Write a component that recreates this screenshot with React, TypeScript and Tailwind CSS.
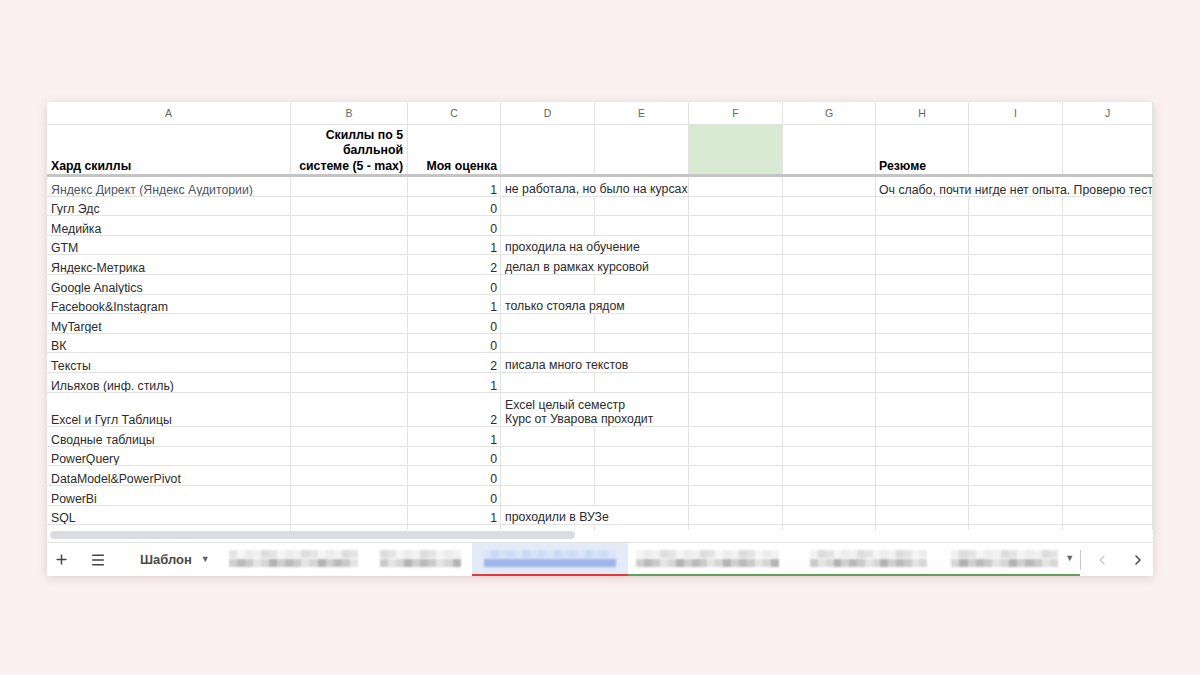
import { Plus, Menu, ChevronLeft, ChevronRight } from 'lucide-react';

const COLS = 'grid grid-cols-[244px_117px_93px_94px_94px_94px_93px_93px_94px_90px]';
const LINE = 'border-r border-b border-[#e2e3e3]';

type Skill = {
  name: string;
  score: number;
  note?: string[];
  summary?: string;
  tall?: boolean;
};

const skills: Skill[] = [
  {
    name: 'Яндекс Директ (Яндекс Аудитории)',
    score: 1,
    note: ['не работала, но было на курсах'],
    summary: 'Оч слабо, почти нигде нет опыта. Проверю тестовое задание',
  },
  { name: 'Гугл Эдс', score: 0 },
  { name: 'Медийка', score: 0 },
  { name: 'GTM', score: 1, note: ['проходила на обучение'] },
  { name: 'Яндекс-Метрика', score: 2, note: ['делал в рамках курсовой'] },
  { name: 'Google Analytics', score: 0 },
  { name: 'Facebook&Instagram', score: 1, note: ['только стояла рядом'] },
  { name: 'MyTarget', score: 0 },
  { name: 'ВК', score: 0 },
  { name: 'Тексты', score: 2, note: ['писала много текстов'] },
  { name: 'Ильяхов (инф. стиль)', score: 1 },
  {
    name: 'Excel и Гугл Таблицы',
    score: 2,
    note: ['Excel целый семестр', 'Курс от Уварова проходит'],
    tall: true,
  },
  { name: 'Сводные таблицы', score: 1 },
  { name: 'PowerQuery', score: 0 },
  { name: 'DataModel&PowerPivot', score: 0 },
  { name: 'PowerBi', score: 0 },
  { name: 'SQL', score: 1, note: ['проходили в ВУЗе'] },
];

const letters = ['A', 'B', 'C', 'D', 'E', 'F', 'G', 'H', 'I', 'J'];

// shades for the pixelated sheet names
const greyTop = ['bg-[#f1f1f1]', 'bg-[#e4e4e4]', 'bg-[#ececec]', 'bg-[#dcdcdc]', 'bg-[#f5f5f5]'];
const greyBottom = ['bg-[#c9c9c9]', 'bg-[#bababa]', 'bg-[#cfcfcf]', 'bg-[#b2b2b2]', 'bg-[#d6d6d6]', 'bg-[#e4e4e4]'];
const blueTop = ['bg-[#d6e1f6]', 'bg-[#cbd8f3]', 'bg-[#dbe4f7]', 'bg-[#d0dcf4]'];
const blueBottom = ['bg-[#a9bfeb]', 'bg-[#95b0e6]', 'bg-[#8ea9e4]', 'bg-[#b3c6ed]', 'bg-[#9db5e8]'];

function Pixelated({ width, seed, blue }: { width: number; seed: number; blue?: boolean }) {
  const count = Math.round(width / 8);
  const top = blue ? blueTop : greyTop;
  const bottom = blue ? blueBottom : greyBottom;
  return (
    <div className="flex flex-col gap-[1px] blur-[1px]" style={{ width }}>
      <div className="flex h-[8px]">
        {Array.from({ length: count }).map((_, i) => (
          <div key={i} className={`h-full flex-1 ${top[(i * 3 + seed) % top.length]}`} />
        ))}
      </div>
      <div className="flex h-[8px]">
        {Array.from({ length: count }).map((_, i) => (
          <div key={i} className={`h-full flex-1 ${bottom[(i * 5 + seed * 2) % bottom.length]}`} />
        ))}
      </div>
    </div>
  );
}

function Caret() {
  return <span className="text-[9px] text-[#5f6368]">▼</span>;
}

function SkillRow({ s, first }: { s: Skill; first?: boolean }) {
  const h = s.tall ? 'h-[34.6px]' : 'h-[19.6px]';
  const cell = `${LINE} ${h} flex items-end leading-[12px] overflow-hidden whitespace-nowrap`;
  return (
    <div className={COLS}>
      <div className={`${cell} pl-[4px] ${first ? 'text-[#4d5566]' : 'text-[#2b2b2b]'}`}>{s.name}</div>
      <div className={cell} />
      <div className={`${cell} justify-end pr-[3px]`}>{s.score}</div>
      {s.note ? (
        <div className={`${cell} col-span-2 pl-[4px] flex-col items-start justify-end leading-[14px]`}>
          {s.note.map((n) => (
            <span key={n}>{n}</span>
          ))}
        </div>
      ) : (
        <>
          <div className={cell} />
          <div className={cell} />
        </>
      )}
      <div className={cell} />
      <div className={cell} />
      {s.summary ? (
        <div className={`${cell} col-span-3 pl-[3px]`}>{s.summary}</div>
      ) : (
        <>
          <div className={cell} />
          <div className={cell} />
          <div className={cell} />
        </>
      )}
    </div>
  );
}

export default function App() {
  return (
    <div className="min-h-[675px] w-[1200px] bg-[#fcf1f1] pt-[102px] pl-[47px] font-['Liberation_Sans',Arial,sans-serif]">
      <div className="w-[1106px] h-[474px] bg-white overflow-hidden flex flex-col shadow-[0_2px_10px_rgba(60,40,40,0.18)]">
        {/* sheet grid */}
        <div className="h-[428px] overflow-hidden text-[12.3px] text-[#2b2b2b]">
          <div className={COLS}>
            {letters.map((l) => (
              <div
                key={l}
                className={`${LINE} h-[23px] pt-[2px] flex items-center justify-center text-[10.5px] text-[#666] bg-white`}
              >
                {l}
              </div>
            ))}
          </div>

          <div className={`${COLS} font-bold text-black leading-[15.5px]`}>
            <div className={`${LINE} h-[49px] border-b-0 flex items-end pl-[4px]`}>Хард скиллы</div>
            <div className={`${LINE} h-[49px] border-b-0 flex items-end justify-end pr-[4px] text-right`}>
              Скиллы по 5
              <br />
              балльной
              <br />
              системе (5 - max)
            </div>
            <div className={`${LINE} h-[49px] border-b-0 flex items-end justify-end pr-[3px]`}>Моя оценка</div>
            <div className={`${LINE} h-[49px] border-b-0`} />
            <div className={`${LINE} h-[49px] border-b-0`} />
            <div className={`${LINE} h-[49px] border-b-0 bg-[#d9ead3]`} />
            <div className={`${LINE} h-[49px] border-b-0`} />
            <div className={`${LINE} h-[49px] border-b-0 flex items-end pl-[3px]`}>Резюме</div>
            <div className={`${LINE} h-[49px] border-b-0`} />
            <div className={`${LINE} h-[49px] border-b-0`} />
          </div>

          {/* frozen rows divider */}
          <div className="h-[3px] bg-[#c4c4c4]" />

          {skills.map((s, i) => (
            <SkillRow key={s.name} s={s} first={i === 0} />
          ))}

          <div className={COLS}>
            {letters.map((l) => (
              <div key={l} className={`${LINE} h-[19.6px]`} />
            ))}
          </div>
        </div>

        {/* horizontal scrollbar */}
        <div className="h-[12px] pl-[3px] pt-[1px]">
          <div className="w-[525px] h-[8px] rounded-full bg-[#dadce0]" />
        </div>

        {/* sheet tabs */}
        <div className="h-[34px] border-t border-[#e3e3e3] flex items-stretch text-[#444]">
          <div className="w-[30px] flex items-center justify-center">
            <Plus size={15} strokeWidth={2.4} className="text-[#444]" />
          </div>
          <div className="w-[43px] flex items-center justify-center">
            <Menu size={16} strokeWidth={2.2} className="text-[#444]" />
          </div>
          <div className="w-[98px] flex items-center gap-[9px] pl-[20px] text-[13px] font-bold text-[#4a4a4a]">
            Шаблон
            <Caret />
          </div>
          <div className="w-[152px] flex items-center pl-[11px] border-b-2 border-transparent">
            <Pixelated width={129} seed={1} />
          </div>
          <div className="w-[102px] flex items-center pl-[10px] border-b-2 border-transparent">
            <Pixelated width={81} seed={3} />
          </div>
          <div className="w-[157px] flex items-center pl-[12px] bg-[#e3ebf9] border-b-2 border-[#e53935]">
            <Pixelated width={132} seed={2} blue />
          </div>
          <div className="w-[178px] flex items-center pl-[8px] border-b-2 border-[#5fa35a]">
            <Pixelated width={142} seed={4} />
          </div>
          <div className="w-[131px] flex items-center pl-[4px] border-b-2 border-[#5fa35a]">
            <Pixelated width={117} seed={0} />
          </div>
          <div className="w-[143px] flex items-center gap-[7px] pl-[14px] border-b-2 border-[#5fa35a]">
            <Pixelated width={107} seed={5} />
            <Caret />
          </div>
          <div className="flex items-center">
            <div className="h-[20px] border-l border-[#c8c8c8]" />
          </div>
          <div className="w-[42px] flex items-center justify-center">
            <ChevronLeft size={16} strokeWidth={1.8} className="text-[#c4c4c4]" />
          </div>
          <div className="w-[30px] flex items-center justify-center">
            <ChevronRight size={16} strokeWidth={2.2} className="text-[#444]" />
          </div>
        </div>
      </div>
    </div>
  );
}
